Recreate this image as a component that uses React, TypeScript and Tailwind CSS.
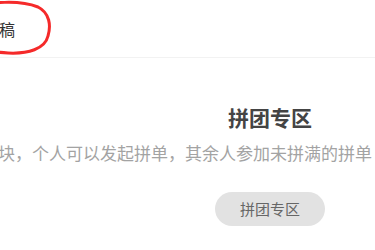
import React from "react";

const App = () => {
  return (
    <div className="relative w-[375px] h-[250px] overflow-hidden bg-white font-['Noto_Sans_CJK_SC','Noto_Sans',sans-serif]">
      {/* top nav, cut at the left */}
      <header className="relative h-[58px] border-b border-[#f2f2f2] flex items-center">
        <span className="text-[16px] leading-[24px] text-[#333] -ml-[1px]">稿</span>
        <svg
          className="absolute left-0 top-0"
          width="60"
          height="58"
          viewBox="0 0 60 58"
          fill="none"
        >
          <path
            d="M-30 9 C -10 1, 20 0, 38 7 C 50 13, 51 26, 48 36 C 45 49, 28 54, 8 53 C -8 52, -24 49, -30 45"
            stroke="#f52a2a"
            strokeWidth="3"
            strokeLinecap="round"
          />
        </svg>
      </header>

      <section className="w-[540px] flex flex-col items-center pt-[45px]">
        <h2 className="text-[21px] leading-[28px] font-bold text-[#444]">拼团专区</h2>
        <p className="self-start -ml-[2px] mt-[10px] text-[17px] leading-[24px] text-[#a3a3a3] whitespace-nowrap">
          块，个人可以发起拼单，其余人参加未拼满的拼单
        </p>
        <button
          type="button"
          className="mt-[27px] w-[110px] h-[34px] rounded-full bg-[#e2e2e2] text-[15px] text-[#666]"
        >
          拼团专区
        </button>
      </section>
    </div>
  );
};

export default App;
